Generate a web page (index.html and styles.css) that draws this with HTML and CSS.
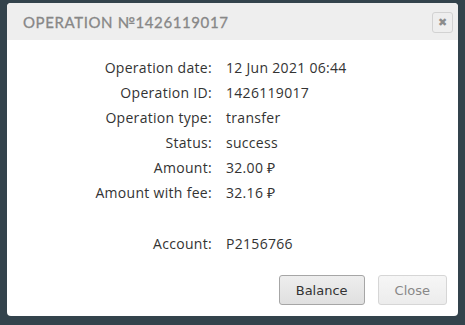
FILE: index.html
```html
<!DOCTYPE html>
<html lang="en">

<head>
    <meta charset="UTF-8">
    <title>Operation</title>
    <link rel="stylesheet" href="styles.css">
</head>

<body>
    <div class="dialog">
        <div class="dialog-header">
            <span class="dialog-title">Operation №1426119017</span>
            <span class="dialog-close">&#10006;</span>
        </div>

        <div class="dialog-body">
            <div class="info-row"><span class="info-label">Operation date:</span><span class="info-value">12 Jun 2021 06:44</span></div>
            <div class="info-row"><span class="info-label">Operation ID:</span><span class="info-value">1426119017</span></div>
            <div class="info-row"><span class="info-label">Operation type:</span><span class="info-value">transfer</span></div>
            <div class="info-row"><span class="info-label">Status:</span><span class="info-value">success</span></div>
            <div class="info-row"><span class="info-label">Amount:</span><span class="info-value">32.00 &#8381;</span></div>
            <div class="info-row"><span class="info-label">Amount with fee:</span><span class="info-value">32.16 &#8381;</span></div>
            <div class="info-row spacer"></div>
            <div class="info-row"><span class="info-label">Account:</span><span class="info-value">P2156766</span></div>
        </div>

        <div class="dialog-buttons">
            <button class="btn">Balance</button>
            <button class="btn btn-light">Close</button>
        </div>
    </div>
</body>

</html>
```

FILE: styles.css
```css
body {
  margin: 0;
  background-color: #33434c;
  font-family: "Open Sans", "Lato", sans-serif;
}

.dialog {
  margin: 3px 7px 0 7px;
  width: 451px;
  height: 313px;
  background: white;
  border-radius: 4px;
  display: flex;
  flex-direction: column;
  overflow: hidden;
}

.dialog-header {
  background-color: #eeeeee;
  height: 37px;
  display: flex;
  align-items: center;
  justify-content: space-between;
  padding: 0 5px 0 16px;
}

.dialog-title {
  font-family: "Lato", sans-serif;
  text-transform: uppercase;
  color: #878787;
  font-size: 15px;
  font-weight: normal;
  letter-spacing: 0.6px;
  padding-top: 1px;
  -webkit-text-stroke: 0.3px #878787;
}

.dialog-close {
  width: 19px;
  height: 19px;
  border: 1px solid #d2d2d2;
  border-radius: 3px;
  color: #8c8c8c;
  font-size: 11px;
  display: flex;
  align-items: center;
  justify-content: center;
  font-family: "DejaVu Sans", sans-serif;
  margin-top: 2px;
}

.dialog-body {
  padding-top: 15px;
  display: flex;
  flex-direction: column;
}

.info-row {
  display: flex;
  height: 25px;
  align-items: center;
  font-size: 14px;
  letter-spacing: 0.3px;
  color: #333;
}

.spacer {
  height: 26px;
}

.info-label {
  width: 205px;
  text-align: right;
}

.info-value {
  margin-left: 14px;
}

.dialog-buttons {
  margin-top: auto;
  display: flex;
  justify-content: flex-end;
  gap: 13px;
  padding: 0 11px 11px 0;
}

.btn {
  font-family: "DejaVu Sans", sans-serif;
  font-size: 13px;
  color: #333;
  height: 30px;
  padding: 0 16px;
  border: 1px solid #a6a6a6;
  border-radius: 3px;
  background: linear-gradient(#eeeeee, #e0e0e0);
}

.btn-light {
  color: #888;
  border-color: #d6d6d6;
  background: linear-gradient(#f6f6f6, #ececec);
}
```
